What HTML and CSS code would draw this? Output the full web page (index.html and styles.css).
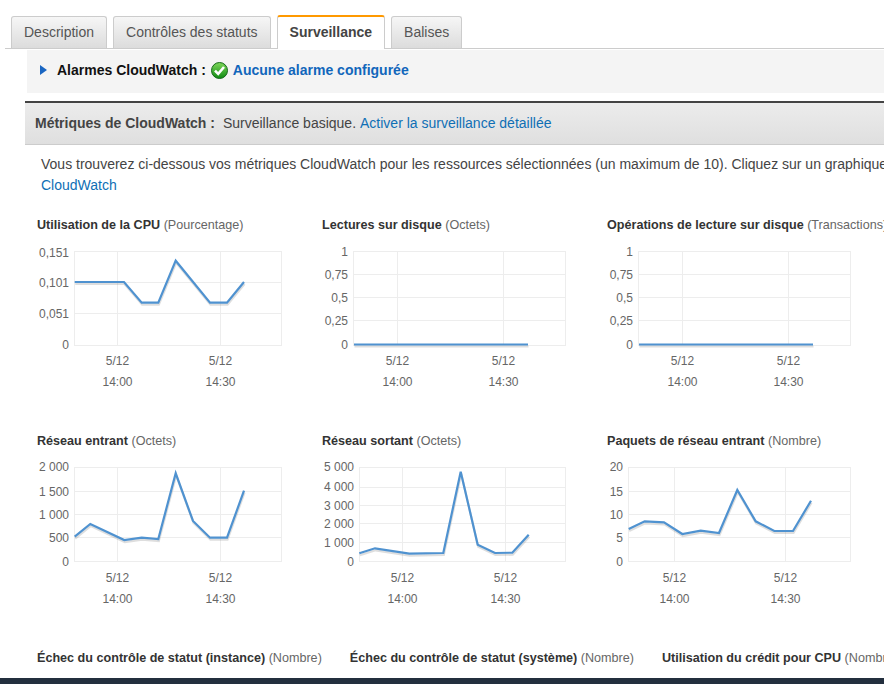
FILE: index.html
```html
<!DOCTYPE html>
<html lang="fr">
<head>
    <meta charset="UTF-8">
    <meta name="viewport" content="width=device-width, initial-scale=1.0">
    <title>Surveillance</title>
    <link rel="stylesheet" href="styles.css">
</head>
<body>
    <div class="page">
        <ul class="tabs">
            <li class="tab">Description</li>
            <li class="tab">Contrôles des statuts</li>
            <li class="tab active">Surveillance</li>
            <li class="tab">Balises</li>
        </ul>

        <div class="alarms">
            <svg class="arrow" width="7" height="10" viewBox="0 0 7 10"><polygon points="0,0 7,5 0,10" fill="#1a66c2"/></svg>
            <strong>Alarmes CloudWatch :</strong>
            <svg class="ok-icon" width="17" height="17" viewBox="0 0 17 17">
                <defs>
                    <linearGradient id="okFill" x1="0" y1="0" x2="0" y2="1">
                        <stop offset="0" stop-color="#7fd75a"/>
                        <stop offset="1" stop-color="#0e8a12"/>
                    </linearGradient>
                </defs>
                <circle cx="8.5" cy="8.5" r="8" fill="url(#okFill)" stroke="#15691a"/>
                <path d="M4 8.6 L7.2 11.8 L13 5" fill="none" stroke="#fff" stroke-width="2.6"/>
            </svg>
            <a href="#" class="alarm-link">Aucune alarme configurée</a>
        </div>

        <div class="metrics-head">
            <strong>Métriques de CloudWatch :</strong>
            <span>Surveillance basique.</span>
            <a href="#">Activer la surveillance détaillée</a>
        </div>

        <p class="intro">Vous trouverez ci-dessous vos métriques CloudWatch pour les ressources sélectionnées (un maximum de 10). Cliquez sur un graphique pour obtenir une vue détaillée.<br><a href="#">CloudWatch</a></p>

        <div class="charts">
            <div class="chart">
                <h4>Utilisation de la CPU <span>(Pourcentage)</span></h4>
                <svg width="285" height="170">
                    <g class="grid">
                        <rect x="37.5" y="11.5" width="207" height="94"/>
                        <line x1="37" x2="244" y1="42.5" y2="42.5"/>
                        <line x1="37" x2="244" y1="73.5" y2="73.5"/>
                        <line x1="80.5" x2="80.5" y1="11" y2="105"/>
                        <line x1="183.5" x2="183.5" y1="11" y2="105"/>
                    </g>
                    <g class="ticks">
                        <text x="32" y="17">0,151</text>
                        <text x="32" y="47">0,101</text>
                        <text x="32" y="78">0,051</text>
                        <text x="32" y="109">0</text>
                    </g>
                    <g class="dates">
                        <text x="80.5" y="125">5/12</text>
                        <text x="80.5" y="146">14:00</text>
                        <text x="183.5" y="125">5/12</text>
                        <text x="183.5" y="146">14:30</text>
                    </g>
                    <polyline class="shadow" points="37.7,42 87,42 104.7,62.7 121.3,62.7 138.7,20.7 173,62.7 190,62.7 207,42"/>
                    <polyline class="line" points="37.7,42 87,42 104.7,62.7 121.3,62.7 138.7,20.7 173,62.7 190,62.7 207,42"/>
                </svg>
            </div>

            <div class="chart">
                <h4>Lectures sur disque <span>(Octets)</span></h4>
                <svg width="285" height="170">
                    <g class="grid">
                        <rect x="31.5" y="11.5" width="212" height="94"/>
                        <line x1="31" x2="244" y1="34.5" y2="34.5"/>
                        <line x1="31" x2="244" y1="57.5" y2="57.5"/>
                        <line x1="31" x2="244" y1="80.5" y2="80.5"/>
                        <line x1="75.5" x2="75.5" y1="11" y2="105"/>
                        <line x1="181.5" x2="181.5" y1="11" y2="105"/>
                    </g>
                    <g class="ticks">
                        <text x="26" y="16">1</text>
                        <text x="26" y="39">0,75</text>
                        <text x="26" y="62">0,5</text>
                        <text x="26" y="85">0,25</text>
                        <text x="26" y="109">0</text>
                    </g>
                    <g class="dates">
                        <text x="75.5" y="125">5/12</text>
                        <text x="75.5" y="146">14:00</text>
                        <text x="181.5" y="125">5/12</text>
                        <text x="181.5" y="146">14:30</text>
                    </g>
                    <polyline class="shadow" points="32,104.5 206,104.5"/>
                    <polyline class="line" points="32,104.5 206,104.5"/>
                </svg>
            </div>

            <div class="chart">
                <h4>Opérations de lecture sur disque <span>(Transactions)</span></h4>
                <svg width="285" height="170">
                    <g class="grid">
                        <rect x="31.5" y="11.5" width="212" height="94"/>
                        <line x1="31" x2="244" y1="34.5" y2="34.5"/>
                        <line x1="31" x2="244" y1="57.5" y2="57.5"/>
                        <line x1="31" x2="244" y1="80.5" y2="80.5"/>
                        <line x1="75.5" x2="75.5" y1="11" y2="105"/>
                        <line x1="181.5" x2="181.5" y1="11" y2="105"/>
                    </g>
                    <g class="ticks">
                        <text x="26" y="16">1</text>
                        <text x="26" y="39">0,75</text>
                        <text x="26" y="62">0,5</text>
                        <text x="26" y="85">0,25</text>
                        <text x="26" y="109">0</text>
                    </g>
                    <g class="dates">
                        <text x="75.5" y="125">5/12</text>
                        <text x="75.5" y="146">14:00</text>
                        <text x="181.5" y="125">5/12</text>
                        <text x="181.5" y="146">14:30</text>
                    </g>
                    <polyline class="shadow" points="32,104.5 206,104.5"/>
                    <polyline class="line" points="32,104.5 206,104.5"/>
                </svg>
            </div>

            <div class="chart">
                <h4>Réseau entrant <span>(Octets)</span></h4>
                <svg width="285" height="170">
                    <g class="grid">
                        <rect x="37.5" y="11.5" width="207" height="94"/>
                        <line x1="37" x2="244" y1="35.5" y2="35.5"/>
                        <line x1="37" x2="244" y1="58.5" y2="58.5"/>
                        <line x1="37" x2="244" y1="81.5" y2="81.5"/>
                        <line x1="80.5" x2="80.5" y1="11" y2="105"/>
                        <line x1="183.5" x2="183.5" y1="11" y2="105"/>
                    </g>
                    <g class="ticks">
                        <text x="32" y="15">2 000</text>
                        <text x="32" y="40">1 500</text>
                        <text x="32" y="63">1 000</text>
                        <text x="32" y="86">500</text>
                        <text x="32" y="110">0</text>
                    </g>
                    <g class="dates">
                        <text x="80.5" y="126">5/12</text>
                        <text x="80.5" y="147">14:00</text>
                        <text x="183.5" y="126">5/12</text>
                        <text x="183.5" y="147">14:30</text>
                    </g>
                    <polyline class="shadow" points="37.7,80.7 53.3,68 87.3,84 104.7,81.7 121.3,83 138.7,17.3 156,65 173,81.7 190,81.7 207,34.7"/>
                    <polyline class="line" points="37.7,80.7 53.3,68 87.3,84 104.7,81.7 121.3,83 138.7,17.3 156,65 173,81.7 190,81.7 207,34.7"/>
                </svg>
            </div>

            <div class="chart">
                <h4>Réseau sortant <span>(Octets)</span></h4>
                <svg width="285" height="170">
                    <g class="grid">
                        <rect x="37.5" y="11.5" width="206" height="94"/>
                        <line x1="37" x2="244" y1="31.5" y2="31.5"/>
                        <line x1="37" x2="244" y1="49.5" y2="49.5"/>
                        <line x1="37" x2="244" y1="67.5" y2="67.5"/>
                        <line x1="37" x2="244" y1="86.5" y2="86.5"/>
                        <line x1="80.5" x2="80.5" y1="11" y2="105"/>
                        <line x1="183.5" x2="183.5" y1="11" y2="105"/>
                    </g>
                    <g class="ticks">
                        <text x="32" y="15">5 000</text>
                        <text x="32" y="35">4 000</text>
                        <text x="32" y="54">3 000</text>
                        <text x="32" y="72">2 000</text>
                        <text x="32" y="91">1 000</text>
                        <text x="32" y="110">0</text>
                    </g>
                    <g class="dates">
                        <text x="80.5" y="126">5/12</text>
                        <text x="80.5" y="147">14:00</text>
                        <text x="183.5" y="126">5/12</text>
                        <text x="183.5" y="147">14:30</text>
                    </g>
                    <polyline class="shadow" points="37.3,97.3 53,92.3 87.3,97.7 121.3,97 138.7,15.7 155.7,88.7 173,97 190.3,96.7 206.7,78.7"/>
                    <polyline class="line" points="37.3,97.3 53,92.3 87.3,97.7 121.3,97 138.7,15.7 155.7,88.7 173,97 190.3,96.7 206.7,78.7"/>
                </svg>
            </div>

            <div class="chart">
                <h4>Paquets de réseau entrant <span>(Nombre)</span></h4>
                <svg width="285" height="170">
                    <g class="grid">
                        <rect x="21.5" y="11.5" width="222" height="94"/>
                        <line x1="21" x2="244" y1="35.5" y2="35.5"/>
                        <line x1="21" x2="244" y1="58.5" y2="58.5"/>
                        <line x1="21" x2="244" y1="81.5" y2="81.5"/>
                        <line x1="67.5" x2="67.5" y1="11" y2="105"/>
                        <line x1="178.5" x2="178.5" y1="11" y2="105"/>
                    </g>
                    <g class="ticks">
                        <text x="16" y="15">20</text>
                        <text x="16" y="40">15</text>
                        <text x="16" y="63">10</text>
                        <text x="16" y="86">5</text>
                        <text x="16" y="110">0</text>
                    </g>
                    <g class="dates">
                        <text x="67.5" y="126">5/12</text>
                        <text x="67.5" y="147">14:00</text>
                        <text x="178.5" y="126">5/12</text>
                        <text x="178.5" y="147">14:30</text>
                    </g>
                    <polyline class="shadow" points="21.7,73 37.7,65.3 57,66.3 75.3,78 93.7,74.7 112,77 130.3,34 148.7,65.3 167.3,75 186,75 204,44.7"/>
                    <polyline class="line" points="21.7,73 37.7,65.3 57,66.3 75.3,78 93.7,74.7 112,77 130.3,34 148.7,65.3 167.3,75 186,75 204,44.7"/>
                </svg>
            </div>
        </div>

        <div class="more-charts">
            <h4>Échec du contrôle de statut (instance) <span>(Nombre)</span></h4>
            <h4>Échec du contrôle de statut (système) <span>(Nombre)</span></h4>
            <h4>Utilisation du crédit pour CPU <span>(Nombre)</span></h4>
        </div>
    </div>
    <div class="footer"></div>
</body>
</html>
```

FILE: styles.css
```css
body {
    font-family: "Liberation Sans", Arial, sans-serif;
    font-size: 14px;
    color: #444;
    margin: 0;
    height: 684px;
    display: flex;
    flex-direction: column;
    overflow: hidden;
    background-color: white;
}

a {
    color: #0f6fb5;
    text-decoration: none;
}

.page {
    flex: 1;
    min-height: 0;
    overflow: hidden;
    padding-top: 15px;
}

.footer {
    height: 6px;
    background-color: #232f3e;
}

/* tabs */
.tabs {
    display: flex;
    align-items: flex-end;
    gap: 6px;
    height: 33px;
    margin: 0 0 0 5px;
    padding: 0 0 0 6px;
    list-style: none;
    border-bottom: 1px solid #ccc;
}

.tab {
    height: 31px;
    padding: 0 12px;
    line-height: 31px;
    border: 1px solid #ccc;
    border-bottom: none;
    border-radius: 3px 3px 0 0;
    background: linear-gradient(#f6f6f6, #dcdcdc);
    color: #555;
}

.tab.active {
    height: 32px;
    line-height: 30px;
    padding: 0 12px;
    margin-bottom: -1px;
    border-top: 2px solid #f90;
    background: white;
    color: #444;
    font-weight: bold;
}

/* alarm line */
.alarms {
    display: flex;
    align-items: center;
    box-sizing: border-box;
    height: 43px;
    margin: 1px 0 8px 27px;
    padding: 0 0 3px 13px;
    background-color: #f4f4f4;
    color: #111;
}

.arrow {
    margin-right: 10px;
}

.ok-icon {
    margin: 0 5px 0 5px;
}

.alarm-link {
    font-weight: bold;
    color: #1166bb;
}

/* metrics header */
.metrics-head {
    display: flex;
    align-items: center;
    box-sizing: border-box;
    height: 44px;
    margin-left: 25px;
    padding: 0 0 2px 10px;
    border-top: 2px solid #444;
    border-bottom: 1px solid #ccc;
    background: linear-gradient(#ececec, #dfdfdf);
    white-space: nowrap;
}

.metrics-head strong {
    margin-right: 8px;
}

.metrics-head span {
    margin-right: 4px;
}

.intro {
    margin: 9px 0 0 41px;
    line-height: 21px;
    white-space: nowrap;
}

/* charts */
.charts {
    display: grid;
    grid-template-columns: repeat(3, 285px);
    grid-auto-rows: 216px;
    margin: 22px 0 0 37px;
}

.chart h4,
.more-charts h4 {
    margin: 0;
    height: 15px;
    font-size: 12.6px;
    line-height: 15px;
    color: #333;
    white-space: nowrap;
}

.chart h4 span,
.more-charts h4 span {
    font-weight: normal;
    color: #666;
}

.chart svg {
    display: block;
    margin-top: 7px;
}

.grid rect,
.grid line {
    fill: none;
    stroke: #ededed;
    stroke-width: 1;
}

.ticks text,
.dates text {
    font-size: 12px;
    fill: #666;
}

.ticks text {
    text-anchor: end;
}

.dates text {
    text-anchor: middle;
}

.line,
.shadow {
    fill: none;
    stroke-width: 2.2;
}

.line {
    stroke: #4f92d0;
}

.shadow {
    stroke: #888;
    stroke-opacity: 0.28;
    transform: translate(0.5px, 2px);
}

.more-charts {
    display: flex;
    gap: 28px;
    margin: 1px 0 0 37px;
    white-space: nowrap;
}
```
